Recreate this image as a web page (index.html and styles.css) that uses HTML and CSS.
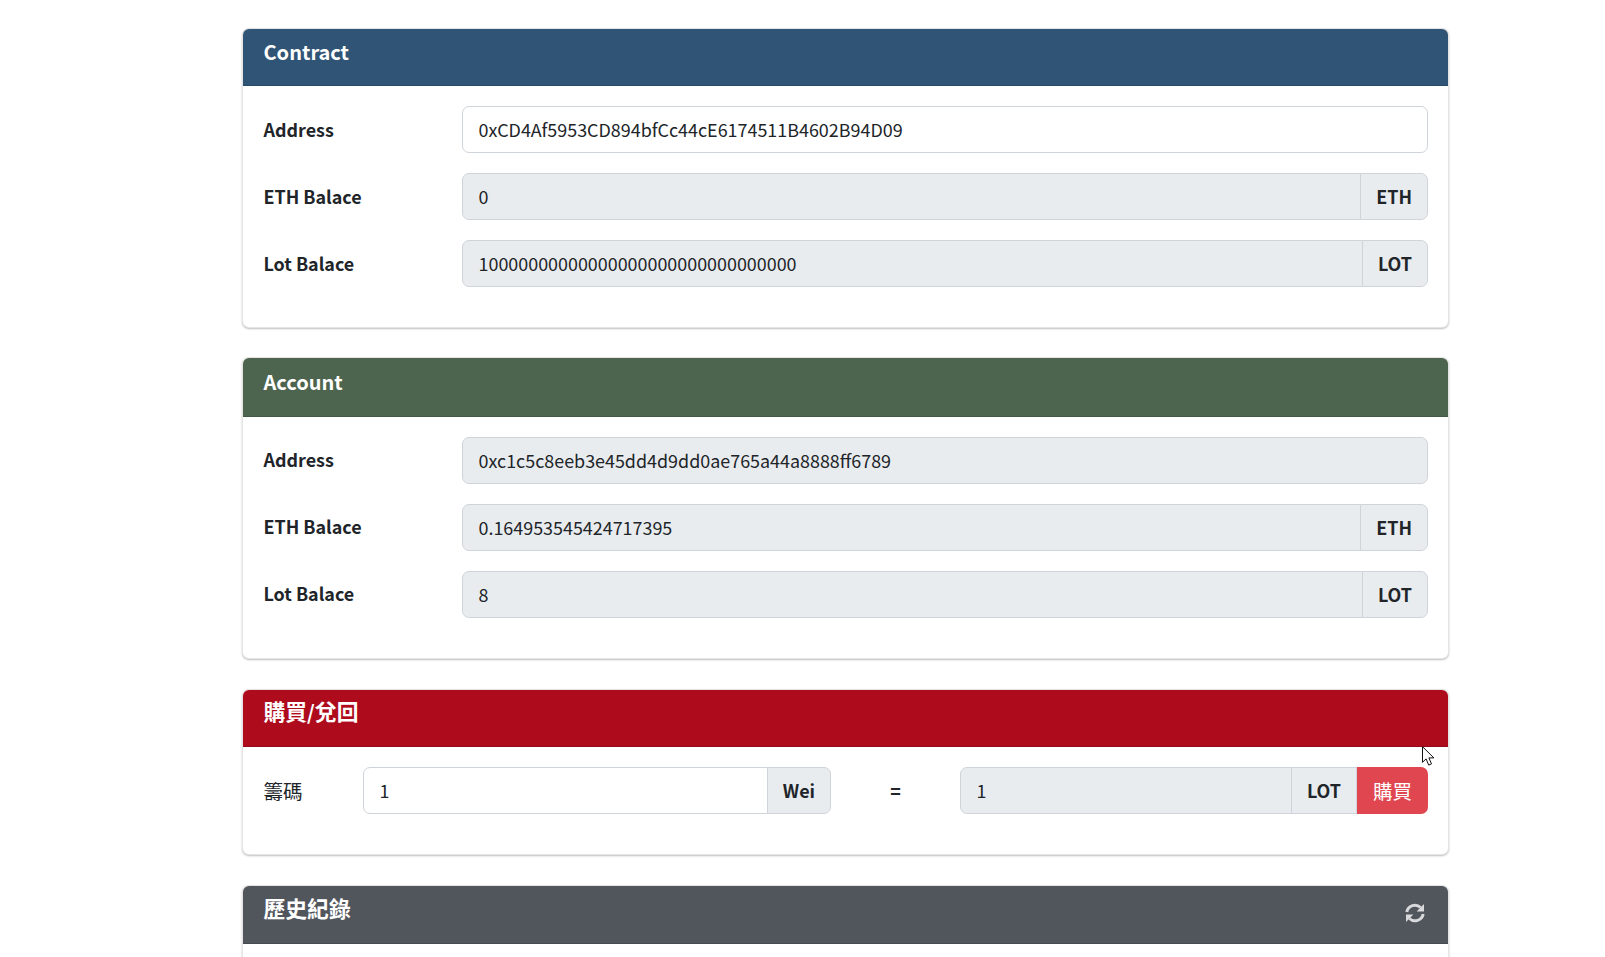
FILE: index.html
```html
<!DOCTYPE html>
<html lang="zh-TW">

<head>
    <meta charset="UTF-8">
    <meta name="viewport" content="width=device-width, initial-scale=1.0">
    <title>Lot</title>
    <link rel="stylesheet" href="styles.css">
</head>

<body>
    <div class="container">
        <div class="card">
            <div class="card-header bg-contract"><span>Contract</span></div>
            <div class="card-body">
                <div class="form-row">
                    <label class="form-label">Address</label>
                    <div class="input-group">
                        <div class="form-control">0xCD4Af5953CD894bfCc44cE6174511B4602B94D09</div>
                    </div>
                </div>
                <div class="form-row">
                    <label class="form-label">ETH Balace</label>
                    <div class="input-group">
                        <div class="form-control disabled">0</div>
                        <span class="input-group-text">ETH</span>
                    </div>
                </div>
                <div class="form-row">
                    <label class="form-label">Lot Balace</label>
                    <div class="input-group">
                        <div class="form-control disabled">10000000000000000000000000000000</div>
                        <span class="input-group-text">LOT</span>
                    </div>
                </div>
            </div>
        </div>

        <div class="card card-account">
            <div class="card-header bg-account"><span>Account</span></div>
            <div class="card-body">
                <div class="form-row">
                    <label class="form-label">Address</label>
                    <div class="input-group">
                        <div class="form-control disabled">0xc1c5c8eeb3e45dd4d9dd0ae765a44a8888ff6789</div>
                    </div>
                </div>
                <div class="form-row">
                    <label class="form-label">ETH Balace</label>
                    <div class="input-group">
                        <div class="form-control disabled">0.164953545424717395</div>
                        <span class="input-group-text">ETH</span>
                    </div>
                </div>
                <div class="form-row">
                    <label class="form-label">Lot Balace</label>
                    <div class="input-group">
                        <div class="form-control disabled">8</div>
                        <span class="input-group-text">LOT</span>
                    </div>
                </div>
            </div>
        </div>

        <div class="card card-buy">
            <div class="card-header bg-buy"><span><span class="cjk">購買</span>/<span class="cjk">兌回</span></span></div>
            <div class="card-body">
                <div class="buy-row">
                    <label class="buy-label"><span class="cjk">籌碼</span></label>
                    <div class="input-group">
                        <div class="form-control">1</div>
                        <span class="input-group-text">Wei</span>
                    </div>
                    <div class="equals">=</div>
                    <div class="input-group">
                        <div class="form-control disabled">1</div>
                        <span class="input-group-text">LOT</span>
                        <button class="btn-buy"><span class="cjk">購買</span></button>
                    </div>
                </div>
            </div>
        </div>

        <div class="card">
            <div class="card-header bg-history">
                <span><span class="cjk">歷史紀錄</span></span>
                <svg class="icon-refresh" viewBox="0 0 20 20">
                    <path class="arc" d="M1.8 9A8.3 8.3 0 0 1 15.6 4.5"/>
                    <path d="M19 1v7.4h-7.4z"/>
                    <path class="arc" d="M18.2 11A8.3 8.3 0 0 1 4.4 15.5"/>
                    <path d="M1 19v-7.4h7.4z"/>
                </svg>
            </div>
            <div class="card-body history-body"></div>
        </div>
    </div>

    <!-- mouse pointer -->
    <svg class="cursor" viewBox="0 0 13 20">
        <path d="M.5.7v15.6l3.6-3.4 2.6 6.2 2.8-1.2-2.6-6h5z"/>
    </svg>
</body>

</html>
```

FILE: styles.css
```css
html,
body {
    height: 100%;
    overflow: hidden;
}

body {
    margin: 0;
    background-color: white;
    color: #212529;
    font-family: "Noto Sans CJK TC", "Noto Sans", sans-serif;
    font-size: 17.92px;
    line-height: 1.5;
}

.container {
    width: 1207px;
    margin-left: 242px;
    padding-top: 28px;
}

.card {
    border: 1px solid rgba(0, 0, 0, 0.1);
    border-radius: 7px;
    box-shadow: 0 1px 2px rgba(0, 0, 0, 0.25);
    margin-bottom: 29px;
    background-color: white;
}

.card-account {
    margin-bottom: 30px;
}

.card-buy {
    margin-bottom: 30px;
}

.card-header {
    display: flex;
    justify-content: space-between;
    height: 58px;
    box-sizing: border-box;
    padding: 8px 20px 0 20.5px;
    border-bottom: 1px solid rgba(0, 0, 0, 0.125);
    border-radius: 6px 6px 0 0;
    color: white;
    font-size: 20px;
    font-weight: 700;
    line-height: 30px;
}

.cjk {
    font-size: 1.09em;
}

.bg-contract {
    height: 57px;
    background-color: #305475;
}

.bg-account {
    height: 59px;
    padding-top: 9px;
    background-color: #4d644e;
}

.bg-buy {
    height: 57px;
    padding-top: 6px;
    background-color: #ae0b1c;
}

.bg-history {
    padding-top: 7px;
    background-color: #51555c;
}

.card-body {
    padding: 20px;
}

.form-row {
    display: grid;
    grid-template-columns: 199px 1fr;
    align-items: center;
    margin-bottom: 20px;
}

.form-label {
    padding-left: 0.5px;
    font-weight: 700;
}

.card-account .form-label {
    margin-top: -2px;
}

.buy-label {
    padding-left: 0.5px;
}

.input-group {
    display: flex;
}

.form-control {
    flex: 1;
    height: 47px;
    box-sizing: border-box;
    padding: 9px 15.5px;
    border: 1px solid #ced4da;
    border-radius: 7px;
    background-color: white;
}

.form-control.disabled {
    background-color: #e9ecef;
}

.input-group-text {
    box-sizing: border-box;
    height: 47px;
    padding: 9px 15px;
    margin-left: -1px;
    border: 1px solid #ced4da;
    border-radius: 0 7px 7px 0;
    background-color: #e9ecef;
    font-weight: 700;
}

.input-group .form-control:not(:last-child) {
    border-radius: 7px 0 0 7px;
}

.buy-row {
    display: grid;
    grid-template-columns: 100px 468px 129px 1fr;
    align-items: center;
    margin-bottom: 20px;
}

.equals {
    text-align: center;
    font-weight: 700;
}

.btn-buy {
    height: 47px;
    padding: 0 16px;
    border: none;
    border-radius: 0 7px 7px 0;
    background-color: #e0464f;
    color: white;
    font-family: inherit;
    font-size: 17.92px;
}

.input-group-text:not(:last-child) {
    border-radius: 0;
}

.icon-refresh {
    width: 20px;
    height: 20px;
    margin-top: 10px;
    margin-right: 3px;
    fill: #d8d9db;
}

.icon-refresh .arc {
    fill: none;
    stroke: #d8d9db;
    stroke-width: 3;
}

.history-body {
    height: 200px;
}

/* se desenha por cima da pagina */
.cursor {
    position: absolute;
    left: 1422px;
    top: 746px;
    width: 13px;
    height: 20px;
    fill: white;
    stroke: #111;
    stroke-width: 1;
}
```
